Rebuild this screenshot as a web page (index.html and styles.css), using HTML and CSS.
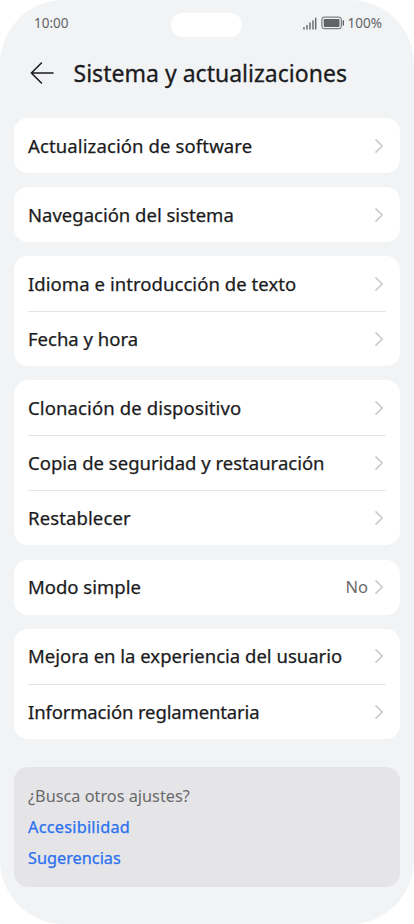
FILE: index.html
```html
<!DOCTYPE html>
<html lang="es">
<head>
<meta charset="utf-8">
<title>Sistema y actualizaciones</title>
<link rel="stylesheet" href="styles.css">
</head>
<body>
<svg width="0" height="0" class="defs"><symbol id="chevron" viewBox="0 0 10 16"><path d="M2 1.9 8.2 8 2 14.1" fill="none" stroke="currentColor" stroke-width="1.7" stroke-linecap="round" stroke-linejoin="round"/></symbol></svg>
<div class="screen">
  <div class="status">
    <span class="time">10:00</span>
    <span class="camera"></span>
    <span class="indicators">
      <svg class="signal" width="14" height="13" viewBox="0 0 14 13"><path d="M1 10v2.6M4 8v4.6M7 5.6v7M10 3.2v9.4M12.7.8v11.8" stroke="currentColor" stroke-width="1.4"/></svg>
      <svg class="battery" width="24" height="14" viewBox="0 0 24 14"><rect x=".9" y="1.1" width="19.4" height="11.6" rx="2.4" fill="none" stroke="currentColor" stroke-width="1"/><rect x="2.7" y="2.9" width="15.8" height="8" rx=".8" fill="currentColor"/><path d="M22.3 4.2v5.4" stroke="currentColor" stroke-width="1.4"/></svg>
      <span class="percent">100%</span>
    </span>
  </div>
  <header class="header">
    <svg class="back" width="24" height="22" viewBox="0 0 24 22"><path d="M23 11H1.5M11.4 1 1.4 11l10 10" fill="none" stroke="currentColor" stroke-width="1.6" stroke-linejoin="round" stroke-linecap="round"/></svg>
    <h1>Sistema y actualizaciones</h1>
  </header>
  <main class="cards">
    <section class="card"><div class="row"><span class="label wide">Actualización de software</span><svg class="chev"><use href="#chevron"/></svg></div></section>
    <section class="card"><div class="row"><span class="label">Navegación del sistema</span><svg class="chev"><use href="#chevron"/></svg></div></section>
    <section class="card">
      <div class="row"><span class="label slight">Idioma e introducción de texto</span><svg class="chev"><use href="#chevron"/></svg></div>
      <div class="row"><span class="label">Fecha y hora</span><svg class="chev"><use href="#chevron"/></svg></div>
    </section>
    <section class="card">
      <div class="row"><span class="label wide">Clonación de dispositivo</span><svg class="chev"><use href="#chevron"/></svg></div>
      <div class="row"><span class="label">Copia de seguridad y restauración</span><svg class="chev"><use href="#chevron"/></svg></div>
      <div class="row"><span class="label wide">Restablecer</span><svg class="chev"><use href="#chevron"/></svg></div>
    </section>
    <section class="card"><div class="row"><span class="label">Modo simple</span><span class="value">No</span><svg class="chev"><use href="#chevron"/></svg></div></section>
    <section class="card">
      <div class="row"><span class="label">Mejora en la experiencia del usuario</span><svg class="chev"><use href="#chevron"/></svg></div>
      <div class="row"><span class="label narrow">Información reglamentaria</span><svg class="chev"><use href="#chevron"/></svg></div>
    </section>
  </main>
  <footer class="more">
    <p>¿Busca otros ajustes?</p>
    <a class="wide">Accesibilidad</a>
    <a>Sugerencias</a>
  </footer>
</div>
</body>
</html>
```
FILE: styles.css
```css
* { box-sizing: border-box; }
body { margin: 0; background: #fff; font-family: "Noto Sans", sans-serif; color: #1b1b1d; }
.defs { position: absolute; }
.screen { width: 414px; height: 924px; background: #f1f3f5; border-radius: 64px; overflow: hidden; padding: 0 14px; }
.status { height: 48px; display: grid; grid-template-columns: 1fr 71px 1fr; color: #626365; font-size: 13.5px; line-height: 20px; padding-top: 13px; align-items: start; }
.time { padding-left: 20px; }
.camera { height: 24px; border-radius: 12px; background: #fff; margin-left: -1px; width: 71px; }
.indicators { display: flex; justify-content: flex-end; align-items: center; padding-right: 18px; height: 20px; }
.signal { margin-right: 4px; margin-top: 1px; }
.battery { margin-right: 3px; }
.header { height: 70px; display: flex; align-items: center; padding: 0 0 21px 16px; }
.back { margin-right: 19.5px; }
h1 { margin: 0; font-size: 23px; font-weight: 400; line-height: 32px; white-space: nowrap; letter-spacing: 0.02px; -webkit-text-stroke: 0.3px currentColor; }
.cards { display: flex; flex-direction: column; gap: 14.13px; }
.card { background: #fff; border-radius: 14px; padding: 0 14px; }
.row { height: 55px; display: flex; align-items: center; font-size: 18.5px; line-height: 26px; white-space: nowrap; }
.row + .row { border-top: 1px solid #e5e5e6; }
.label { flex: 1; -webkit-text-stroke: 0.25px currentColor; }
.wide { letter-spacing: 0.12px; }
.slight { letter-spacing: 0.06px; }
.narrow { letter-spacing: -0.14px; }
.value { font-size: 16.5px; color: #69696b; margin-right: 6px; }
.chev { width: 10px; height: 16px; color: #cbcbcd; margin-right: 2px; }
.more { margin-top: 28px; height: 120px; border-radius: 14px; background: #e5e5e7; padding: 14px; display: flex; flex-direction: column; font-size: 16.3px; line-height: 31px; }
.more p { margin: 0; color: #69696b; }
.more a { color: #2a70f0; -webkit-text-stroke: 0.25px currentColor; }
.more .wide { letter-spacing: 0.24px; }
```
